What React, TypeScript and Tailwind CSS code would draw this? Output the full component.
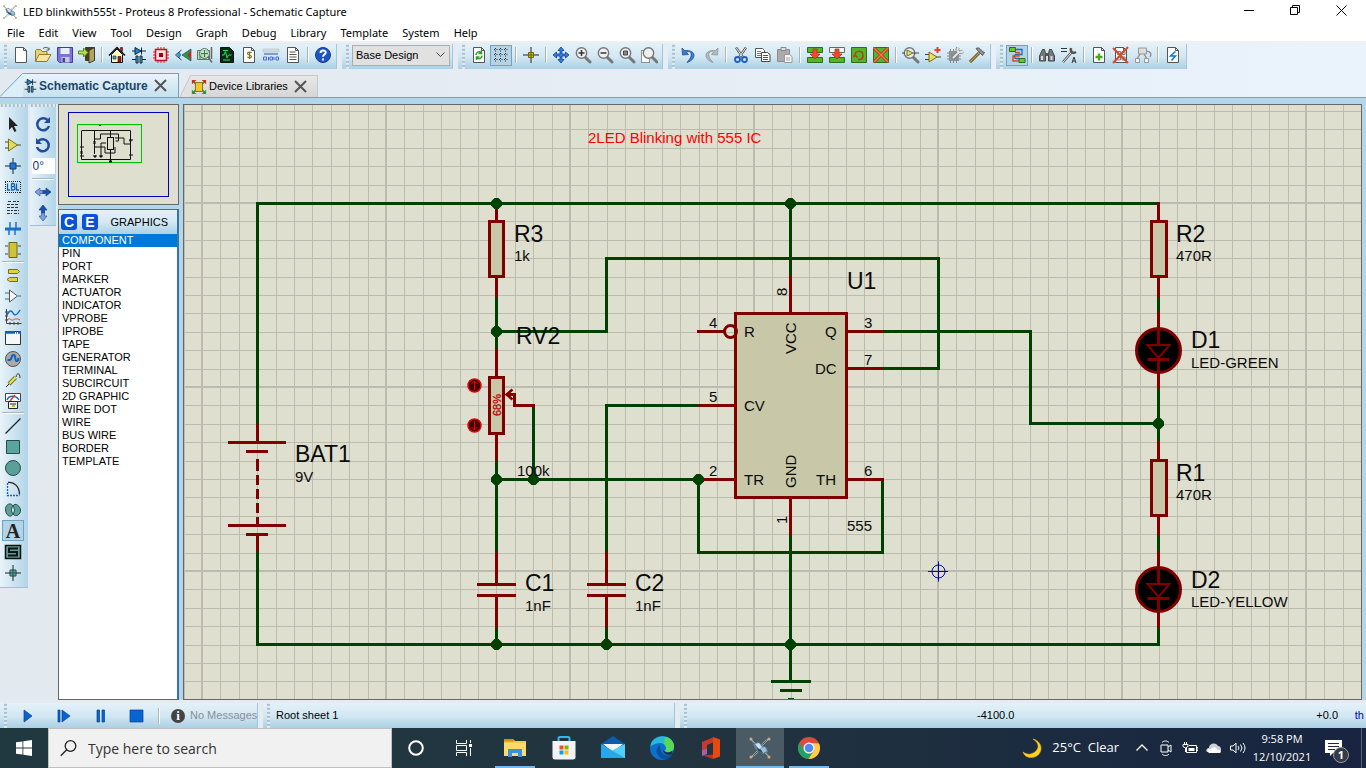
import React from 'react';
import type { ReactNode } from 'react';

const Svg = ({ children, s = 'h-[18px] w-[18px]', vb = '0 0 18 18' }: { children: ReactNode; s?: string; vb?: string }) => (
  <svg className={`${s} shrink-0`} viewBox={vb} fill="none" aria-hidden="true">
    {children}
  </svg>
);

const page = <path d="M3.500 1.500h8l3 3v12h-11z M11.500 1.500v3h3" fill="#fff" stroke="#555" />;
const magnifier = (
  <>
    <path d="M11 11l5 5" stroke="#777" strokeWidth="3" strokeLinecap="round" />
    <circle cx="7.500" cy="7" r="5.200" fill="#eef1f2" stroke="#777" strokeWidth="1.400" />
  </>
);
const diodeCap = (
  <>
    <path d="M2 5h14 M11.500 1.500v7" stroke="#123" />
    <path d="M5 1.500v7l6-3.500z" fill="#1c87dc" stroke="#123" />
    <path d="M2 13.500h4 M12 13.500h4" stroke="#123" />
    <path d="M6 10h2v7h-2z M10 10h2v7h-2z" fill="#4db3f0" stroke="#123" />
  </>
);

const icons: Record<string, ReactNode> = {
  new: page,
  open: (
    <>
      <path d="M1.500 15V4.500l1-1h4l1.500 2h5v3" fill="#e7d27c" stroke="#8f7a2c" />
      <path d="M1.500 15.500l3.500-7h12l-4 7z" fill="#f8e79a" stroke="#8f7a2c" />
      <path d="M9 2.500c3-2 5-1 6 1m0-2v2.500h-2.500" stroke="#555" />
    </>
  ),
  save: (
    <>
      <path d="M1.500 1.500h15v15h-13l-2-2z" fill="#7c74d6" stroke="#443c9c" />
      <path d="M4.500 2h9v6h-9z" fill="#e8eefb" />
      <path d="M5.500 11h8v5.500h-8z" fill="#c9c9dd" />
      <path d="M6.500 12h2.500v4h-2.500z" fill="#443c9c" />
    </>
  ),
  exit: (
    <>
      <path d="M7.500 1.500h9v13h-9z" fill="#463c1e" stroke="#3c3c30" />
      <path d="M11 4.500l5.500-3v13l-5.500 2.500z" fill="#b6a25a" stroke="#3c3c30" />
      <path d="M.5 5h5V2l4.500 4.500L5.500 11V8h-5z" fill="#b9e04a" stroke="#5c8420" />
    </>
  ),
  home: (
    <>
      <path d="M3.500 8.500v8h11v-8L9 3z" fill="#fff9c0" stroke="#111" />
      <path d="M1 9.500L9 1.500l8 8" stroke="#111" strokeWidth="1.500" />
      <path d="M12.500 1.500h2v4l-2-2z" fill="#d01818" stroke="#111" strokeWidth=".6" />
      <path d="M10 10.500h3v6h-3z" fill="#b01010" stroke="#111" strokeWidth=".6" />
      <path d="M5 10h3v3H5z" fill="#4aa8e8" stroke="#111" strokeWidth=".6" />
    </>
  ),
  schematic: diodeCap,
  pcb: (
    <>
      <path d="M6 1v16M9 1v16M12 1v16M1 6h16M1 9h16M1 12h16" stroke="#d32030" />
      <path d="M3.500 3.500h11v11h-11z" fill="#f9dede" stroke="#c01020" strokeWidth="1.500" />
      <path d="M7 7h4v4h-4z" fill="#a00010" />
    </>
  ),
  view3d: (
    <>
      <path d="M8 9l9-6v12z" fill="#18a050" stroke="#234" strokeWidth=".6" />
      <path d="M13.500 9l3.500-5v10z" fill="#d0202c" />
      <path d="M7.500 4L1.500 9l6 5" stroke="#247" />
      <path d="M3 9l3-3v6z" fill="#247" />
      <circle cx="5.500" cy="9" r="1.800" fill="#28a0d0" />
    </>
  ),
  gerber: (
    <>
      <path d="M1.500 4.500h12v9h-12z" fill="#b8ddc0" stroke="#4c8060" />
      <path d="M3 7h3v4h6M4 13V9h7V4" stroke="#2a8048" />
      <circle cx="8.500" cy="7.500" r="5" fill="#d7edd8" fillOpacity=".7" stroke="#666" />
      <path d="M5 7.500h7M8.500 4v7" stroke="#2a8048" />
      <path d="M12 11l4 5.500M15.500 1v12" stroke="#666" strokeWidth="1.500" />
    </>
  ),
  explorer: (
    <>
      <path d="M2.500 1.500h9l4 4v11h-13z" fill="#062a14" stroke="#111" />
      <path d="M4 9h2l1.500-3.500L9 12l1.500-3h3M5 4.500h5M5 14h7" stroke="#28e060" />
    </>
  ),
  bom: (
    <>
      {page}
      <path d="M11.500 7c-.5-1-4-1.300-4 .5s4 1.200 4 3-3.500 1.600-4 .3M9.500 5.500v7.500" stroke="#7f7a24" strokeWidth="1.200" />
    </>
  ),
  vsm: (
    <>
      <path d="M1 3h16v3h-16z" fill="#d4dae4" stroke="#b1b8c4" strokeWidth=".5" />
      <path d="M2 8h14" stroke="#5d83c8" strokeWidth="1.500" />
      <path d="M1.500 11h3v3h-3zM6.500 11v3.500M8 11h2.500v3H8zM12 11v3M14 11h2.500v3H14z" stroke="#4966d0" />
    </>
  ),
  notes: (
    <>
      {page}
      <path d="M5.500 6h6M5.500 8.500h7M5.500 11h7M5.500 13.500h7" stroke="#555" />
    </>
  ),
  help: (
    <>
      <circle cx="9" cy="9" r="7.500" fill="#1d55c4" stroke="#123a90" />
      <path d="M6.500 7c0-3.500 5.500-3.200 5.200-.4C11.500 8.500 9 8.500 9 10.700M9 12.500v2" stroke="#fff" strokeWidth="2" />
    </>
  ),
  refresh: (
    <>
      {page}
      <path d="M6 9c0-3 3-4 5-2.500M11.500 4.500v3h-3M12 9.500c0 3-3 4-5 2.500M6.500 14v-3h3" stroke="#2f9e28" strokeWidth="1.500" />
    </>
  ),
  grid: <path d="M2 3.500h15M2 8.500h15M2 13.500h15M3.500 2v15M8.500 2v15M13.500 2v15" stroke="#333" strokeDasharray="1 1.500" />,
  origin: (
    <>
      <path d="M9 1v16M1 9h16" stroke="#222" />
      <path d="M6.500 6.500h5v5h-5z" fill="#c8be18" stroke="#6b6608" />
      <path d="M9 6v6M6 9h6" stroke="#6b6608" />
    </>
  ),
  pan: <path d="M9 1l3 3.500h-2v3.500h3.500V6L17 9l-3.500 3v-2H10v3.500h2L9 17l-3-3.500h2V10H4.500v2L1 9l3.500-3v2H8V4.500H6z" fill="#2f7ee0" stroke="#123f98" strokeWidth=".8" />,
  zoomIn: <>{magnifier}<path d="M4.500 7h6M7.500 4v6" stroke="#333" strokeWidth="1.500" /></>,
  zoomOut: <>{magnifier}<path d="M4.500 7h6" stroke="#333" strokeWidth="1.500" /></>,
  zoomAll: <>{magnifier}<path d="M5.500 5h4v4h-4z" fill="#888" stroke="#444" /></>,
  zoomArea: <><path d="M1.500 4.500h8v12h-8z" fill="#fff" stroke="#333" strokeDasharray="1 1" /><g transform="translate(1 0)">{magnifier}</g></>,
  undo: <path d="M2 2l.5 7 6-.5-2-2c4-3 7 2 2.500 7.500l-2 2.500c9-2.500 10.500-13-2.500-12z" fill="#3b7cc8" stroke="#1f4f94" strokeWidth=".8" />,
  redo: <path d="M16 2l-.5 7-6-.5 2-2c-4-3-7 2-2.500 7.500l2 2.500c-9-2.500-10.500-13 2.500-12z" fill="#b4babe" stroke="#8c949a" strokeWidth=".8" />,
  cut: (
    <>
      <path d="M4 1.500l7 10M14 1.500l-7 10" stroke="#555" strokeWidth="2.400" />
      <path d="M4 1.500l7 10M14 1.500l-7 10" stroke="#e9eef0" strokeWidth="1" />
      <circle cx="5.500" cy="13.500" r="2.500" stroke="#1f5fc0" strokeWidth="1.800" />
      <circle cx="12.500" cy="13.500" r="2.500" stroke="#1f5fc0" strokeWidth="1.800" />
    </>
  ),
  copy: (
    <>
      <path d="M1.500 2.500h7l2 2v7h-9z" fill="#fff" stroke="#555" />
      <path d="M3 5.500h4M3 7.500h4M3 9.500h4" stroke="#777" />
      <path d="M7.500 6.500h6l2.500 2v7h-8.500z" fill="#fff" stroke="#444" />
      <path d="M9 9.500h5M9 11.500h5M9 13.500h5" stroke="#555" />
    </>
  ),
  paste: (
    <>
      <path d="M1.500 3.500h12v12h-12z" fill="#ababab" stroke="#8d8d8d" />
      <path d="M5 1.500h5v3H5z" fill="#ddd" stroke="#888" />
      <path d="M8.500 8.500h5l2.500 2v6H8.500z" fill="#f5f5f5" stroke="#999" />
      <path d="M10 12h4M10 14h4" stroke="#aaa" />
    </>
  ),
  blockCopy: <><path d="M1.500 1.500h15v5h-15zM1.500 11.500h15v5h-15z" fill="#53b52a" stroke="#2d6f16" /><path d="M7 3h4v5h3l-5 5-5-5h3z" fill="#f04c28" stroke="#b02a14" strokeWidth=".7" /></>,
  blockMove: <><path d="M1.500 1.500h15v5h-15z" fill="#f3f6f2" stroke="#60705c" /><path d="M1.500 11.500h15v5h-15z" fill="#53b52a" stroke="#2d6f16" /><path d="M7 3h4v5h3l-5 5-5-5h3z" fill="#f04c28" stroke="#b02a14" strokeWidth=".7" /></>,
  blockRotate: <><path d="M1.500 1.500h15v15h-15z" fill="#53b52a" stroke="#2d6f16" /><path d="M5 9l2.500 2.500M5 9l-1.500 2M5 10c-.5-6 7.500-6 8-1s-4 5-5 4" stroke="#b8401c" strokeWidth="1.500" /></>,
  blockDelete: <><path d="M1.500 1.500h15v15h-15z" fill="#53b52a" stroke="#2d6f16" /><path d="M2 2l14 14M16 2L2 16" stroke="#a83418" strokeWidth="3" /><path d="M2 2l14 14M16 2L2 16" stroke="#ff704a" strokeWidth="1.600" /></>,
  pick: <>{magnifier}<path d="M0 7h3M11 7h6" stroke="#445" /><path d="M5 4v6l6-3z" fill="#dde46c" stroke="#6c7420" /></>,
  make: <><path d="M1 8.500h4M1 13.500h4M12 11h5" stroke="#444" /><path d="M5 6v10l8-5z" fill="#e9df5c" stroke="#776c16" /><path d="M13.500 1v6M10.500 4h6" stroke="#e8421e" strokeWidth="2" /></>,
  package: (
    <>
      <path d="M4.500 3v14M7.500 3v14M10.500 3v14M1 7h14M1 10h14M1 13h14" stroke="#888" />
      <path d="M3 5h10v10H3z" fill="#8d9194" />
      <path d="M7 12l6-6M12 1.500c-2 4 1 6 5 4" stroke="#777" strokeWidth="3.500" />
      <path d="M7 12l6-6M12 1.500c-2 4 1 6 5 4" stroke="#e4e8ea" strokeWidth="2" />
    </>
  ),
  decompose: <><path d="M2 16l9-9" stroke="#4c3c12" strokeWidth="3" /><path d="M2 16l9-9" stroke="#c79a44" strokeWidth="1.500" /><path d="M8 2.500c3-1.500 4 0 6.500 3l2 1-2 3-5-5z" fill="#8b9194" stroke="#444" strokeWidth=".8" /></>,
  autoroute: (
    <>
      <path d="M8 3.500h6v5H8c-2 0-2 4 0 4h3" stroke="#1c68c8" strokeWidth="1.300" />
      <path d="M7 6.500h4v3.500H5v5h6" stroke="#e04824" strokeWidth="1.500" />
      <path d="M1.500 1.500h6v4h-6zM11 12.500h6v4h-6z" fill="#65c832" stroke="#2d6f16" />
    </>
  ),
  find: (
    <>
      <path d="M4.500 3.500h2l1 4v7.500h-6v-5zM13.500 3.500h-2l-1 4v7.500h6v-5z" fill="#747a7e" stroke="#444" />
      <path d="M7 7h4v3H7z" fill="#555" />
      <path d="M3 10h2v4H3zM12.500 10h2v4h-2z" fill="#d5dadd" />
    </>
  ),
  property: <><path d="M1 2.500h6M1 5.500h6M12 17l2-6 2 6M12.500 15h3" stroke="#333" /><path d="M3 16l8-9M11 2c-1 4 2 6 5 4" stroke="#555" strokeWidth="2.500" /><path d="M3 16l8-9" stroke="#eee" /></>,
  sheetAdd: <>{page}<path d="M9 7.500v7M5.500 11h7" stroke="#46a81c" strokeWidth="2.300" /></>,
  sheetDel: <>{page}<path d="M5.500 5.500h3v3h-3zM10 5.500h3v3h-3zM5.500 11h3v3h-3zM10 11h3v3h-3z" stroke="#777" /><path d="M1 2l15 15M16 1L1 17" stroke="#d9482c" strokeWidth="2" /></>,
  hierarchy: <><path d="M4.500 2h8v6h-8z" fill="#ddd" stroke="#999" /><path d="M1.500 12.500h4v4h-4zM10.500 12.500h4v4h-4z" fill="#f4f4f4" stroke="#999" /><path d="M6 8l-2.500 4M10 8l2.500 4M16 11c2-3 0-6-3-5.500" stroke="#888" strokeWidth="1.300" /></>,
  erc: <>{page}<path d="M11.500 5.500l-5 4.500h5l-4 4.500" stroke="#0878d8" strokeWidth="1.500" /></>,
  pointer: <path d="M5 2v13l3-3 2.500 5 2-1-2.500-5h4z" fill="#222" />,
  component: <><path d="M1 6h4M1 12h4M13 9h4" stroke="#444" /><path d="M4.500 3v12l9-6z" fill="#e4db5c" stroke="#77701a" /></>,
  junction: <><path d="M9 1v16M1 9h16" stroke="#123" /><path d="M6 6h6v6H6z" fill="#1b76d0" stroke="#123c78" /></>,
  label: (
    <>
      <path d="M1 3.500h16M1 14.500h16M1.500 4v11M16.500 4v11" stroke="#222" strokeDasharray="1 1" />
      <path d="M3.500 5.500v6.500h2.500M7.500 5.500v6.500h2c2 0 2-3.300 0-3.300h-2h1.500c2 0 2-3.200 0-3.200h-1.500M12.500 5.500v6.500h2.500" stroke="#1260b0" strokeWidth="1.300" />
    </>
  ),
  script: <path d="M4 2.500h4M9 2.500h6M3 5.500h3M7 5.500h8M3 8.500h12M3 11.500h6M10 11.500h5M3 14.500h5M10 14.500h5" stroke="#333" strokeDasharray="3 1" />,
  bus: <><path d="M6 2v7M12 2v7M5 9v6M11 9v6" stroke="#1f72c0" strokeWidth="1.500" /><path d="M1 9h16" stroke="#1870c8" strokeWidth="3" /></>,
  subcircuit: <><path d="M1 5h3M1 13h3M14 5h3M14 13h3" stroke="#444" /><path d="M5 1.500h8v15H5z" fill="#cfc33c" stroke="#6b6512" /></>,
  terminal: <path d="M4.500 3.500h9l2 2-2 2h-9zM13.500 11.500h-8l-2.500 2 2.500 2h8z" fill="#ddd23e" stroke="#77701a" />,
  devicePin: <><path d="M1 6h5M1 12h5M14 9h3" stroke="#1a8080" /><path d="M5.500 3v12l8-6z" fill="#f4f8fa" stroke="#555" /></>,
  graph: <><path d="M2.500 1v14.500h15M1 4h3M1 8h3M1 12h3M6 14v3M10 14v3M14 14v3" stroke="#444" /><path d="M3 7c3-6 5-4 6-2s3 4 7-3" stroke="#1468c8" strokeWidth="1.500" /><path d="M3 12c3-3 4 1 6 0s3-2 7 0" stroke="#d0482c" /></>,
  tape: <><path d="M1.500 2.500h15v13h-15z" fill="#f6f8f8" stroke="#333" /><path d="M1 3.500h16" stroke="#1463c0" strokeWidth="2.500" strokeDasharray="10 1 1 1" /></>,
  generator: <><circle cx="9" cy="9" r="7.500" fill="#aaa" stroke="#555" /><path d="M3.500 10h2c3 0 1-5 4-5s1 6 3 6 2-2 2-3" stroke="#1260bd" strokeWidth="2" /></>,
  probe: <><path d="M2 16l4-4" stroke="#333" /><path d="M5 13l6.500-6.500" stroke="#77751a" strokeWidth="4" /><path d="M5.500 12.500l6-6" stroke="#eaea60" strokeWidth="2" /><path d="M12 6c1-5 4-4 4 1" stroke="#333" /></>,
  instrument: (
    <>
      <path d="M1.500 1.500h15v8h-15z" fill="#fff" stroke="#444" />
      <path d="M3 8c2-5 9-5 12 0" stroke="#1468c8" strokeWidth="1.300" />
      <path d="M6 9l5-6" stroke="#d0442c" strokeWidth="1.500" />
      <path d="M4.500 9.500h9v7h-9z" fill="#f3f3f3" stroke="#222" />
      <path d="M6 12h6" stroke="#222" />
      <path d="M8 13h3v2H8z" fill="#c8b82c" />
    </>
  ),
  line: <path d="M1.500 16.500l15-15" stroke="#222" strokeWidth="1.300" />,
  box: <path d="M2.500 2.500h13v13h-13z" fill="#5ba39d" stroke="#254d4b" />,
  circle: <circle cx="9" cy="9" r="7.500" fill="#5b9f99" stroke="#254d4b" />,
  arc: <><path d="M3.500 3v12.500h12" stroke="#1260c8" strokeWidth="1.300" strokeDasharray="2 1" /><path d="M4 2.500c6-1 11.500 4 11.500 12" stroke="#222" strokeWidth="1.300" /></>,
  path: <path d="M9 5c-2-4-8-2-7.500 4S7 17 9 13c3 4 8 0 7.500-4S11 1 9 5z M9 5c2 3 2 5 0 8c-2-3-2-5 0-8" fill="#5b9f99" stroke="#254d4b" />,
  symbol: <><path d="M1.500 2.500h15v13h-15z" fill="#5b9f99" stroke="#111" strokeWidth="1.500" /><path d="M14 5.500H5V9h8v3.500H4" stroke="#111" strokeWidth="2" /></>,
  marker: <><path d="M9 1v16M1 9h16" stroke="#222" /><path d="M6 6h6v6H6z" fill="#63a8a2" stroke="#244c4a" /><path d="M9 5v8M5 9h8" stroke="#244c4a" /></>,
  rotateCw: <><path d="M13.500 5A6 6 0 1 0 15 11" stroke="#214c9c" strokeWidth="2.500" /><path d="M16 2v6h-6z" fill="#214c9c" /></>,
  rotateCcw: <><path d="M4.500 5A6 6 0 1 1 3 11" stroke="#214c9c" strokeWidth="2.500" /><path d="M2 2v6h6z" fill="#214c9c" /></>,
  mirrorX: <><path d="M9 7.500H6V5L1 9l5 4v-2.500h3z" fill="#7f9fd8" stroke="#3458a0" strokeWidth=".7" /><path d="M9 7.500h3V5l5 4-5 4v-2.500H9z" fill="#1c50b0" stroke="#183c80" strokeWidth=".7" /></>,
  mirrorY: <><path d="M7.500 9V6H5l4-5 4 5h-2.500v3z" fill="#1c50b0" stroke="#183c80" strokeWidth=".7" /><path d="M7.500 9v3H5l4 5 4-5h-2.500V9z" fill="#7f9fd8" stroke="#3458a0" strokeWidth=".7" /></>,
};

const barBg = 'bg-linear-to-b from-[#e4f1f8] via-[#d3e8f3] to-[#abd0e4]';

const Tool = ({ name, on, label }: { name: string; on?: boolean; label?: string }) => (
  <button
    type="button"
    aria-label={label ?? name}
    className={`flex h-[21px] w-[22px] shrink-0 items-center justify-center ${on ? 'border border-[#6fa3c4] bg-[#b4d4e6]' : ''}`}
  >
    <Svg>{icons[name]}</Svg>
  </button>
);

const Grip = () => (
  <span className="flex w-[10px] shrink-0 justify-center self-stretch">
    <span className="w-[3px] bg-[repeating-linear-gradient(to_bottom,#f8fcff_0px,#8faabb_2px,#dcebf3_3px,#dcebf3_4px)]" />
  </span>
);

const Group = ({ children }: { children: ReactNode }) => (
  <div className={`flex h-[25px] items-center border-r border-[#9fc6dc] pr-[2px] ${barBg}`}>
    <Grip />
    <div className="flex items-center pb-[3px]">{children}</div>
  </div>
);

const Tools = ({ items, on }: { items: string; on?: string }) => (
  <>
    {items.split(' ').map((n, i) =>
      n === '|' ? (
        <span key={i} className="flex w-2 shrink-0 justify-center">
          <span className="h-4 w-[2px] border-r border-white bg-[#a9b5bc]" />
        </span>
      ) : (
        <Tool key={i} name={n} on={n === on} />
      ),
    )}
  </>
);

const VTools = ({ items, on }: { items: string; on?: string }) => (
  <>
    {items.split(' ').map((n, i) =>
      n === '|' ? (
        <span key={i} className="my-px h-[2px] w-[22px] shrink-0 border-b border-white bg-[#a9b5bc]" />
      ) : (
        <button
          key={i}
          type="button"
          aria-label={n}
          className={`flex h-[21px] w-[22px] shrink-0 items-center justify-center ${n === on ? 'border border-[#6fa3c4] bg-[#b4d4e6]' : ''}`}
        >
          {n === 'text' ? <span className="font-['Liberation_Serif',serif] text-xl leading-none font-bold text-[#222]">A</span> : <Svg>{icons[n]}</Svg>}
        </button>
      ),
    )}
  </>
);

const HGrip = () => (
  <span className="mb-[6px] h-[3px] w-full shrink-0 bg-[repeating-linear-gradient(to_right,#f8fcff_0px,#8faabb_2px,#dcebf3_3px,#dcebf3_4px)]" />
);

const Close = () => (
  <svg className="h-[13px] w-[13px]" viewBox="0 0 13 13" aria-hidden="true">
    <path d="M1 1l11 11M12 1L1 12" stroke="#555" strokeWidth="2" />
  </svg>
);

const RED = '#800000';
const GREEN = '#004000';
const BODY = '#c8c8a8';

const wires = [
  'M257.500 424V203.500H1157',
  'M257.500 552V644.500H1158.500V628',
  'M496.500 297V349',
  'M496.500 331.500H606.500V258.500H938.500V368.500H883',
  'M496.500 461V552',
  'M496.500 628V644',
  'M606.500 628V644',
  'M533.500 407V479',
  'M496.500 479.500H698.500V552.500H882.500V481',
  'M606.500 552V405.500H698',
  'M883 331.500H1030.500V423.500H1158',
  'M790.500 203V275',
  'M790.500 535V681',
  'M771 681.500H811M780 690.500H802M788 699.500H794',
  'M1158.500 297V312M1158.500 389V441M1158.500 536V551',
];

const pins = [
  'M257.500 424V442M228 442.500H286M246 451.500H268M228 525.500H286M246 534.500H268M257.500 534V552',
  'M257.500 459V471M257.500 475V485M257.500 489V499M257.500 503V513M257.500 517V524',
  'M496.500 208V220M496.500 277V297M496.500 349V376M496.500 435V461',
  'M496.500 552V583M477 584.500H516M477 595.500H516M496.500 596V628',
  'M606.500 552V583M587 584.500H626M587 595.500H626M606.500 596V628',
  'M506 394.500H514.500V405.500H535',
  'M697 331.500H724M698 405.500H735M704 479.500H735',
  'M848 331.500H883M848 368.500H883M848 479.500H884',
  'M790.500 275V313M790.500 498V535',
  'M1158.500 202V220M1158.500 277V297M1158.500 312V328M1158.500 372V389',
  'M1158.500 441V459M1158.500 517V536M1158.500 551V567M1158.500 611V628',
];

const bodies: [number, number, number, number][] = [
  [489.5, 221.5, 14, 55],
  [489.5, 377.5, 14, 56],
  [735.5, 313.5, 111, 184],
  [1151.5, 221.5, 15, 55],
  [1151.5, 460.5, 15, 55],
];

const dots: [number, number][] = [
  [496.5, 203.5], [790.5, 203.5], [496.5, 331.5], [496.5, 479.5], [533.5, 479.5], [698.5, 479.5],
  [1158.5, 423.5], [496.5, 644.5], [606.5, 644.5], [790.5, 644.5],
];

const bigLabels: [number, number, string][] = [
  [514, 242, 'R3'], [516, 344, 'RV2'], [847, 289, 'U1'], [1176, 242, 'R2'], [1191, 348, 'D1'],
  [1176, 481, 'R1'], [1191, 588, 'D2'], [295, 462, 'BAT1'], [525, 591, 'C1'], [635, 591, 'C2'],
];

const smallLabels: [number, number, string][] = [
  [514, 261, '1k'], [517, 476, '100k'], [847, 531, '555'], [1176, 261, '470R'], [1191, 368, 'LED-GREEN'],
  [1176, 500, '470R'], [1191, 607, 'LED-YELLOW'], [295, 482, '9V'], [525, 611, '1nF'], [635, 611, '1nF'],
  [709, 328, '4'], [709, 402, '5'], [709, 476, '2'], [864, 328, '3'], [864, 365, '7'], [864, 476, '6'],
  [744, 337, 'R'], [744, 411, 'CV'], [744, 485, 'TR'], [825, 337, 'Q'], [815, 374, 'DC'], [816, 485, 'TH'],
];

const upLabels: [number, number, string][] = [
  [796, 354, 'VCC'], [796, 488, 'GND'], [787, 296, '8'], [787, 524, '1'],
];

const GRID_X = 202;
const GRID_Y = 203;
const PITCH = 18.4;

function Schematic() {
  const cols = Array.from({ length: 160 }, (_, k) => k - 1);
  const rows = Array.from({ length: 100 }, (_, k) => k - 5);
  return (
    <svg className="block h-full w-full font-['Liberation_Sans',Arial,sans-serif]" role="img" aria-label="555 timer LED blinker schematic">
      <g transform="translate(-184 -105)">
        <g fill="#bcbcae" shapeRendering="crispEdges">
          {cols.map((k) => (
            <rect key={k} x={Math.round(GRID_X + k * PITCH - (k % 10 === 0 ? 1 : 0))} y="105" width={k % 10 === 0 ? 2 : 1} height="1800" />
          ))}
          {rows.map((k) => (
            <rect key={k} x="184" y={Math.round(GRID_Y + k * PITCH - (k % 10 === 0 ? 1 : 0))} width="2900" height={k % 10 === 0 ? 2 : 1} />
          ))}
        </g>
        <g stroke={GREEN} strokeWidth="3" fill="none">
          {wires.map((d) => <path key={d} d={d} />)}
        </g>
        <g stroke={RED} strokeWidth="3" fill="none">
          {pins.map((d) => <path key={d} d={d} />)}
          <path d="M512.500 389.500L506.500 394.500L512.500 399.500" strokeWidth="2.500" />
          {bodies.map(([x, y, w, h]) => <rect key={`${x}-${y}`} x={x} y={y} width={w} height={h} fill={BODY} />)}
          <circle cx="730.500" cy="331.500" r="6" />
          {[350.5, 589.5].map((y) => (
            <g key={y} transform={`translate(1158.5 ${y})`}>
              <circle r="22" fill="#000" />
              <path d="M0 -22V-6M0 8V22M-11 9H11" />
              <path d="M-11 -5.500H11L0 7.500Z" strokeWidth="2" />
            </g>
          ))}
        </g>
        {dots.map(([x, y]) => (
          <path key={`${x}-${y}`} transform={`translate(${x} ${y})`} d="M-2 -5.500h4l3.500 3.500v4l-3.500 3.500h-4l-3.500 -3.500v-4z" fill={GREEN} />
        ))}
        {[385.5, 425.5].map((y, i) => (
          <g key={y} transform={`translate(474.5 ${y})`} stroke="#e80000">
            <circle r="6.500" fill="#400000" strokeWidth="1.500" />
            <path d={i ? 'M0 -4.500V4.500M-3 1.500L0 4.500L3 1.500' : 'M0 4.500V-4.500M-3 -1.500L0 -4.500L3 -1.500'} fill="none" />
          </g>
        ))}
        <g fontSize="23" fill="#0a0a0a">
          {bigLabels.map(([x, y, t]) => <text key={t} x={x} y={y}>{t}</text>)}
        </g>
        <g fontSize="15" fill="#0a0a0a">
          {smallLabels.map(([x, y, t]) => <text key={`${x}-${y}`} x={x} y={y}>{t}</text>)}
          {upLabels.map(([x, y, t]) => <text key={t} transform={`translate(${x} ${y}) rotate(-90)`}>{t}</text>)}
        </g>
        <text transform="translate(501 416) rotate(-90)" fontSize="11" fill="#c00000" stroke="#c00000" strokeWidth=".3">68%</text>
        <text x="588" y="143" fontSize="15" fill="#ff0000">2LED Blinking with 555 IC</text>
        <g stroke="#0000c0" fill="none">
          <circle cx="938.500" cy="571.500" r="6.500" />
          <path d="M928 571.500h20M938.500 561.500v20" />
        </g>
      </g>
    </svg>
  );
}

const graphics = [
  'COMPONENT', 'PIN', 'PORT', 'MARKER', 'ACTUATOR', 'INDICATOR', 'VPROBE', 'IPROBE', 'TAPE', 'GENERATOR', 'TERMINAL',
  'SUBCIRCUIT', '2D GRAPHIC', 'WIRE DOT', 'WIRE', 'BUS WIRE', 'BORDER', 'TEMPLATE',
];

const menus = ['File', 'Edit', 'View', 'Tool', 'Design', 'Graph', 'Debug', 'Library', 'Template', 'System', 'Help'];

const AppLogo = ({ s }: { s: string }) => (
  <svg className={s} viewBox="0 0 24 24" aria-hidden="true">
    <path d="M3 3l7 7M21 3l-7 7M3 21l7-7M21 21l-7-7M3 3c2 4 4 6 8 7M21 3c-4 1-6 3-8 7M3 21c4-1 6-3 8-7M21 21c-2-4-4-6-8-7" stroke="#9aa1a6" fill="none" />
    <path d="M5 8l5-2 4 3 5 3 1 4-5 2-8-5z" fill="#5d7f9c" />
    <path d="M7 8l4-1 3 4-3 2z" fill="#cfe4f2" />
    <path d="M12 12l5-1 2 4-4 2z" fill="#9cc0da" />
    <path d="M9 12l4 2 2 3-5-2z" fill="#2f4858" />
    <g fill="#d8a878"><circle cx="3" cy="3" r="1.500" /><circle cx="21" cy="3" r="1.500" /><circle cx="3" cy="21" r="1.500" /><circle cx="21" cy="21" r="1.500" /></g>
  </svg>
);

const taskIcons: { name: string; active?: boolean; under?: string; icon: ReactNode }[] = [
  {
    name: 'File Explorer', under: 'bg-[#76b9ed]',
    icon: <><path d="M1 3h9l2 2h11v15H1z" fill="#f7c948" /><path d="M1 3h9l1 2.500H1z" fill="#d98f06" /><path d="M1 7h22v13H1z" fill="#ffd970" /><path d="M5 20v-7h14v8h-4v-4H9v4H5z" fill="#3a93da" /></>,
  },
  {
    name: 'Microsoft Store',
    icon: <><path d="M6.500 6V2.500q0-1.500 1.500-1.500h8q1.500 0 1.500 1.500V6" stroke="#35b8f0" strokeWidth="2" fill="none" /><path d="M.5 5h23v16q0 2.500-2.500 2.500H3Q.5 23.500.5 21z" fill="#f3f3f3" /><path d="M7.500 9.500h4v4h-4z" fill="#f25022" /><path d="M12.500 9.500h4v4h-4z" fill="#7fba00" /><path d="M7.500 14.500h4v4h-4z" fill="#00a4ef" /><path d="M12.500 14.500h4v4h-4z" fill="#ffb900" /></>,
  },
  {
    name: 'Mail',
    icon: <><path d="M0 8L12 0l12 8v4H0z" fill="#0c5cab" /><path d="M2 8h20l-10 8z" fill="#f4f4f4" /><path d="M0 8l12 7L24 8v14H0z" fill="#28a8ea" /><path d="M24 8v14L11 14.500z" fill="#50d0f8" /></>,
  },
  {
    name: 'Microsoft Edge',
    icon: <><circle cx="12" cy="12" r="12" fill="#0c72c8" /><path d="M.5 10C2-2 22-4 24 10c.5 6-6 8-9 5 3-4-1-8-5-8-5 0-8 3-9.500 3z" fill="#2bb8d8" /><path d="M15 1c7 1 10 7 9 11s-6 5-9 3c2-3 1-5-1-7z" fill="#58d858" /><path d="M10 9c-7 4-2 14 5 14.500C22 22 22 18 22 18c-5 3-12 2-12-9z" fill="#0b4fa0" /><path d="M13 14c2 3 6 3 9 1l1 3c-5 2-10 0-10-4z" fill="#1e303a" /></>,
  },
  {
    name: 'Office',
    icon: <><path d="M3 6L15 1v5l-7 3v9l-5 2z" fill="#c43a2c" /><path d="M3 14v6l5-2v-5z" fill="#b05aa8" /><path d="M14 1l7 2.500v17L14 23z" fill="#e64a10" /><path d="M4 19.500l10-1V23z" fill="#d22828" /></>,
  },
  { name: 'Proteus', active: true, under: 'bg-[#76b9ed]', icon: null },
  {
    name: 'Chrome', under: 'bg-[#76b9ed]',
    icon: <><circle cx="12" cy="12" r="11" fill="#dd4b3e" /><path d="M2.500 6.500A11 11 0 0 0 11.500 23L17 14.500 12 17 7 14.500z" fill="#1da462" /><path d="M22 7.500A11 11 0 0 1 11.500 23L17 14.500V9.500L12 7z" fill="#ffcd46" /><circle cx="12" cy="12" r="5.500" fill="#fff" /><circle cx="12" cy="12" r="4.300" fill="#4c8bf5" /></>,
  },
];

export default function App() {
  return (
    <div className="flex h-screen min-h-0 flex-col overflow-hidden bg-[#e4ebf1] font-['Liberation_Sans',Arial,sans-serif] text-[11px] text-black">
      <header className="shrink-0 bg-white font-['Noto_Sans','Open_Sans',sans-serif]">
        <div className="flex h-6 items-center">
          <div className="flex flex-1 items-center gap-[5px] pl-[2px]">
            <AppLogo s="h-4 w-4" />
            <h1 className="text-[11px]">LED blinkwith555t - Proteus 8 Professional - Schematic Capture</h1>
          </div>
          <div className="flex h-full items-center pr-[2px] pb-[3px]">
            <button type="button" aria-label="Minimize" className="flex h-full w-[46px] items-center justify-center">
              <svg className="h-[11px] w-[11px]" viewBox="0 0 11 11"><path d="M0 5.500h10" stroke="#000" /></svg>
            </button>
            <button type="button" aria-label="Restore" className="flex h-full w-[46px] items-center justify-center">
              <svg className="h-[11px] w-[11px]" viewBox="0 0 11 11" fill="none" stroke="#000"><path d="M.5 2.500h7v7h-7zM2.500 2V.5h7v7H8" /></svg>
            </button>
            <button type="button" aria-label="Close" className="flex h-full w-[46px] items-center justify-center">
              <svg className="h-[11px] w-[11px]" viewBox="0 0 11 11"><path d="M.5.5l10 10M10.500.5l-10 10" stroke="#000" /></svg>
            </button>
          </div>
        </div>
        <nav className="flex h-[17px] items-center gap-[14px] pl-[7px] text-[11px] leading-4">
          {menus.map((m) => <button type="button" key={m}>{m}</button>)}
        </nav>
      </header>

      <div className="flex h-7 shrink-0 items-end gap-[5px] border-t-2 border-[#f0f0f0] bg-linear-to-r from-[#e2e9ef] to-[#eaf2fb]">
        <Group><Tools items="new open save exit | home schematic pcb view3d gerber explorer bom vsm notes | help" /></Group>
        <Group>
          <span className="relative flex">
            <select aria-label="Design variant" className="h-[21px] w-[98px] appearance-none border border-[#adadad] bg-[#e1e1e1] pl-[3px] text-[11px]">
              <option>Base Design</option>
            </select>
            <svg className="pointer-events-none absolute top-[7px] right-[5px] h-[6px] w-[9px]" viewBox="0 0 9 6"><path d="M.5.5l4 4 4-4" stroke="#444" fill="none" /></svg>
          </span>
        </Group>
        <Group><Tools on="grid" items="refresh grid | origin | pan zoomIn zoomOut zoomAll zoomArea" /></Group>
        <Group><Tools items="undo redo | cut copy paste | blockCopy blockMove blockRotate blockDelete | pick make package decompose" /></Group>
        <Group><Tools on="autoroute" items="autoroute | find property | sheetAdd sheetDel hierarchy | erc" /></Group>
      </div>

      <div className="flex h-[29px] shrink-0 items-end border-b border-[#6fa3c0] bg-linear-to-r from-[#e2e9ef] to-[#eaf2fb]" role="tablist">
        <div className="flex h-6">
          <svg className="h-6 w-[23px]" viewBox="0 0 23 24"><path d="M0 24L23 0V24z" fill="#dceef7" /><path d="M0 23.500L22.500.5" stroke="#6fa3c0" /></svg>
          <div className="flex items-center border-t border-r border-[#6fa3c0] bg-linear-to-b from-[#e8f4fa] to-[#c6e1ef] pr-[11px] text-[12px] font-bold text-[#1c4668]">
            <button type="button" role="tab" aria-selected="true" className="flex w-[131px] items-center gap-px whitespace-nowrap"><Svg s="h-[15px] w-[15px]">{icons.schematic}</Svg>Schematic Capture</button>
            <button type="button" aria-label="Close Schematic Capture"><Close /></button>
          </div>
        </div>
        <div className="flex h-[22px]">
          <svg className="h-[22px] w-3" viewBox="0 0 12 22"><path d="M1 22L12 0V22z" fill="#e2e2e2" /><path d="M1 22L11.500.5" stroke="#c5c5c5" /></svg>
          <div className="flex items-center border-t border-r border-[#c8c8c8] bg-linear-to-b from-[#e8e8e8] to-[#d6d6d6] pr-[10px] text-[11px]">
            <button type="button" role="tab" aria-selected="false" className="flex w-[103px] items-center gap-[2px] whitespace-nowrap">
              <Svg s="h-4 w-4"><path d="M2 2l14 14M16 2L2 16" stroke="#2a9a30" strokeWidth="2" /><path d="M1 1h5L1 6zM17 1v5l-5-5z" fill="#d02a20" /><path d="M1 17v-5l5 5zM17 17h-5l5-5z" fill="#2a9a30" /><path d="M5 4h8v10H5z" fill="#f0c828" stroke="#8a6510" /></Svg>
              Device Libraries
            </button>
            <button type="button" aria-label="Close Device Libraries"><Close /></button>
          </div>
        </div>
      </div>

      <main className="flex min-h-0 flex-1 bg-[#b4d6e8] pt-[6px]">
        <div className="flex w-[58px] shrink-0 items-start gap-[2px] bg-[#e2e9ef]">
          <div className="flex w-7 flex-col items-center border-b border-[#9cc0d4] bg-linear-to-r from-[#e8f3f9] to-[#b2d5e8] pr-[2px] pb-1">
            <HGrip />
            <VTools on="text" items="pointer component junction label script bus subcircuit | terminal devicePin graph tape generator probe instrument | line box circle arc path text symbol marker" />
          </div>
          <div className="flex w-[26px] flex-col items-center border-b border-[#9cc0d4] bg-linear-to-r from-[#e8f3f9] to-[#b2d5e8] pb-[2px]">
            <HGrip />
            <VTools items="rotateCw rotateCcw" />
            <input aria-label="Rotation angle" defaultValue="0°" className="my-[3px] h-4 w-[23px] bg-white pl-px text-[12px] text-[#15357c]" />
            <VTools items="| mirrorX mirrorY" />
          </div>
        </div>

        <div className="flex w-[121px] shrink-0 flex-col gap-1">
          <div className="h-[101px] shrink-0 border border-[#6b6666] bg-[#dfdfd0]">
            <svg className="h-full w-full" viewBox="59 105 119 99" fill="none" aria-label="Sheet overview">
              <rect x="68.500" y="112.500" width="100" height="84" stroke="#0000c0" />
              <rect x="77.500" y="124.500" width="64" height="38" stroke="#00c000" />
              <path d="M81.500 131v28.500h49M81.500 130.500h49v29M94.500 131v23M94.500 139h6v-5h18v7h-3M101 143v13M101 143h5M110.500 131v6M110.500 150v12M95 147h10v6h10v-6M115 138h9v6h7M80 147h4M80 156h4M93 156h4M99 156h4M129 140h4M129 155h4M99 125.500h2" stroke="#111" />
              <rect x="107.500" y="137.500" width="6" height="12" stroke="#111" />
              <path d="M129.500 140.500h2M94.500 141v3M81.500 151v3M94 156.500h2M100 156.500h2M109 161.500h3" stroke="#111" strokeWidth="2" />
            </svg>
          </div>
          <div className="flex min-h-0 flex-1 flex-col border border-r-2 border-[#6b6666] border-r-[#3377aa] bg-white">
            <div className={`flex h-6 shrink-0 items-center gap-[5px] pl-[2px] ${barBg}`}>
              <button type="button" className="h-4 w-4 rounded-[3px] bg-[#0a50d8] text-[14px] leading-4 font-bold text-white">C</button>
              <button type="button" className="h-4 w-4 rounded-[3px] bg-[#0a50d8] text-[14px] leading-4 font-bold text-white">E</button>
              <span className="flex-1 pr-[9px] text-right text-[11px]">GRAPHICS</span>
            </div>
            <ul className="text-[11px] leading-[13px]">
              {graphics.map((g, i) => (
                <li key={g} className={`pl-[3px] ${i === 0 ? 'bg-[#0078d7] text-white' : ''}`}>{g}</li>
              ))}
            </ul>
          </div>
        </div>

        <div className="ml-1 flex min-w-0 flex-1 pr-1">
          <div className="min-w-0 flex-1 overflow-hidden border border-[#6b6666] bg-[#dfdfd0]">
            <Schematic />
          </div>
        </div>
      </main>

      <div className="flex h-[28px] shrink-0 items-stretch gap-[5px] pt-[3px] text-[11px]">
        <div className={`flex w-[258px] shrink-0 items-center border-r border-[#9fc6dc] ${barBg}`}>
          <Grip />
          {[
            ['Run', 'M5 3l8 6-8 6z'],
            ['Step', 'M3 3h2v12H3zM7 3l8 6-8 6z'],
            ['Pause', 'M6 3h2.500v12H6zM11 3h2.500v12H11z'],
            ['Stop', 'M3 3h13v12H3z'],
          ].map(([n, d]) => (
            <button key={n} type="button" aria-label={n} className="flex h-6 w-9 shrink-0 items-center justify-center">
              <Svg><path d={d} fill="#0764d0" stroke="#0a3f8c" strokeWidth=".7" /></Svg>
            </button>
          ))}
          <span className="mx-1 h-4 w-[2px] shrink-0 border-r border-white bg-[#a9b5bc]" />
          <span className="ml-[7px] flex h-[14px] w-[14px] shrink-0 items-center justify-center rounded-full bg-[#444] font-['Liberation_Serif',serif] text-[13px] font-bold text-white">i</span>
          <span className="ml-[5px] whitespace-nowrap text-[#888f94]">No Messages</span>
        </div>
        <div className={`flex w-[412px] items-center border-r border-[#9fc6dc] ${barBg}`}>
          <Grip />
          <span className="pl-[3px]">Root sheet 1</span>
        </div>
        <div className={`flex flex-1 items-center ${barBg}`}>
          <Grip />
          <span className="flex-1 pl-[287px]">-4100.0</span>
          <span>+0.0</span>
          <span className="w-7 pr-[2px] text-right text-[#0000b0]">th</span>
        </div>
      </div>

      <footer className="flex h-10 shrink-0 items-stretch bg-linear-to-r from-[#203840] via-[#21343f] to-[#182440] font-['Open_Sans','Noto_Sans',sans-serif] text-white">
        <button type="button" aria-label="Start" className="flex w-12 items-center justify-center">
          <svg className="h-4 w-4" viewBox="0 0 16 16" fill="#fff"><path d="M0 2.300l6.500-.9v6.200H0zM7.300 1.300L16 0v7.600H7.300zM0 8.400h6.500v6.200L0 13.700zM7.300 8.400H16V16l-8.700-1.300z" /></svg>
        </button>
        <label className="flex w-[344px] items-center gap-[11px] border border-[#c0c0c0] bg-[#f1f1f1] pl-[11px]">
          <svg className="h-[17px] w-[17px]" viewBox="0 0 17 17" fill="none" stroke="#222" strokeWidth="1.300"><circle cx="10.500" cy="6" r="5.300" /><path d="M6.700 9.800L.8 15.800" /></svg>
          <input type="text" aria-label="Search" placeholder="Type here to search" className="min-w-0 flex-1 bg-transparent text-[14px] text-[#333] outline-none placeholder:text-[#333]" />
        </label>
        <button type="button" aria-label="Cortana" className="flex w-12 items-center justify-center">
          <svg className="h-4 w-4" viewBox="0 0 16 16"><circle cx="8" cy="8" r="6.800" fill="none" stroke="#fff" strokeWidth="2" /></svg>
        </button>
        <button type="button" aria-label="Task View" className="flex w-12 items-center justify-center">
          <svg className="h-4 w-4" viewBox="0 0 16 16" fill="none" stroke="#fff"><path d="M.5 0v3.500h10V0M.5 5.500h10v5H.5zM.5 16v-3.500h10V16M14.500 0v3M14.500 8v8" /><path d="M13 4h3v3h-3z" fill="#fff" stroke="none" /></svg>
        </button>
        <div className="ml-[3px] flex flex-1 gap-px">
          {taskIcons.map((t) => (
            <button key={t.name} type="button" aria-label={t.name} className={`flex w-12 flex-col items-center ${t.active ? 'bg-[#4b5b66]' : ''}`}>
              <span className="flex flex-1 items-center pt-[2px]">
                {t.icon ? <Svg s="h-6 w-6" vb="0 0 24 24">{t.icon}</Svg> : <AppLogo s="h-6 w-6" />}
              </span>
              <span className={`h-[2px] ${t.active ? 'w-full' : 'w-10'} ${t.under ?? ''}`} />
            </button>
          ))}
        </div>
        <div className="flex items-center">
          <button type="button" className="mr-[15px] flex items-center gap-[10px] text-[13px] whitespace-pre">
            <svg className="h-5 w-5" viewBox="0 0 20 20"><path d="M11 1c5 3 7 8 3 12-4 4-9 4-13 1 2 7 12 7 16 2S19 3 11 1z" fill="#ffd21c" stroke="#f5b210" strokeWidth=".6" /></svg>
            <span>25°C  Clear</span>
          </button>
          <div className="flex items-center gap-2">
            <svg className="h-4 w-4" viewBox="0 0 16 16" fill="none" stroke="#fff"><path d="M2.500 10.500L8 5l5.500 5.500" strokeWidth="1.300" /></svg>
            <svg className="h-4 w-4" viewBox="0 0 16 16" fill="none" stroke="#fff"><path d="M3 5h7v7H3zM10 7l3-2v7l-3-2M4 2.500c2-2 5-2 7 0M4 14c2 2 5 2 7 0" /></svg>
            <svg className="h-4 w-4" viewBox="0 0 16 16" fill="none" stroke="#fff"><path d="M4.500 7.500v5h10v-7H7M14.500 7.500H16v3h-1.500M1 4.500h5v2q-2.500 3-5 0zM2.500 2v2M4.500 2v2M3.500 8v4" /><path d="M6.500 8h6v3h-6z" fill="#fff" stroke="none" /></svg>
            <svg className="h-4 w-4" viewBox="0 0 16 16"><path d="M3 8c0-5 7-6 9-2 3 0 4 4 2 6H2C-.5 12-.5 8.500 3 8z" fill="#ccd2d8" /><path d="M3 13c-3-2-.5-5 2-4 2-3 6-2 6 1 3-1 5 2 3 3z" fill="#fff" /></svg>
            <svg className="h-4 w-4" viewBox="0 0 16 16" fill="none" stroke="#fff"><path d="M.5 6h2.500l3-3v10l-3-3H.5zM8 6q2 2 0 4M10.500 4.500q3 3.500 0 7M13 3q4 5 0 10" /></svg>
          </div>
          <time className="w-[72px] text-center text-[11px] leading-[18px]">9:58 PM<br />12/10/2021</time>
          <button type="button" aria-label="Notifications, 1 new" className="relative mr-1 ml-1 flex h-10 w-10 items-center justify-center border-r border-[#56606e] pr-4">
            <svg className="h-[17px] w-[17px] shrink-0" viewBox="0 0 17 17"><path d="M0 0h17v13H8l-3 3v-3H0z" fill="#fff" /><path d="M3 3.500h11M3 6.500h11M3 9.500h7" stroke="#1b2a42" /></svg>
            <span className="absolute right-3 bottom-[5px] flex h-4 w-4 items-center justify-center rounded-full border border-[#999] bg-[#333b47] text-[11px] font-bold">1</span>
          </button>
        </div>
      </footer>
    </div>
  );
}
